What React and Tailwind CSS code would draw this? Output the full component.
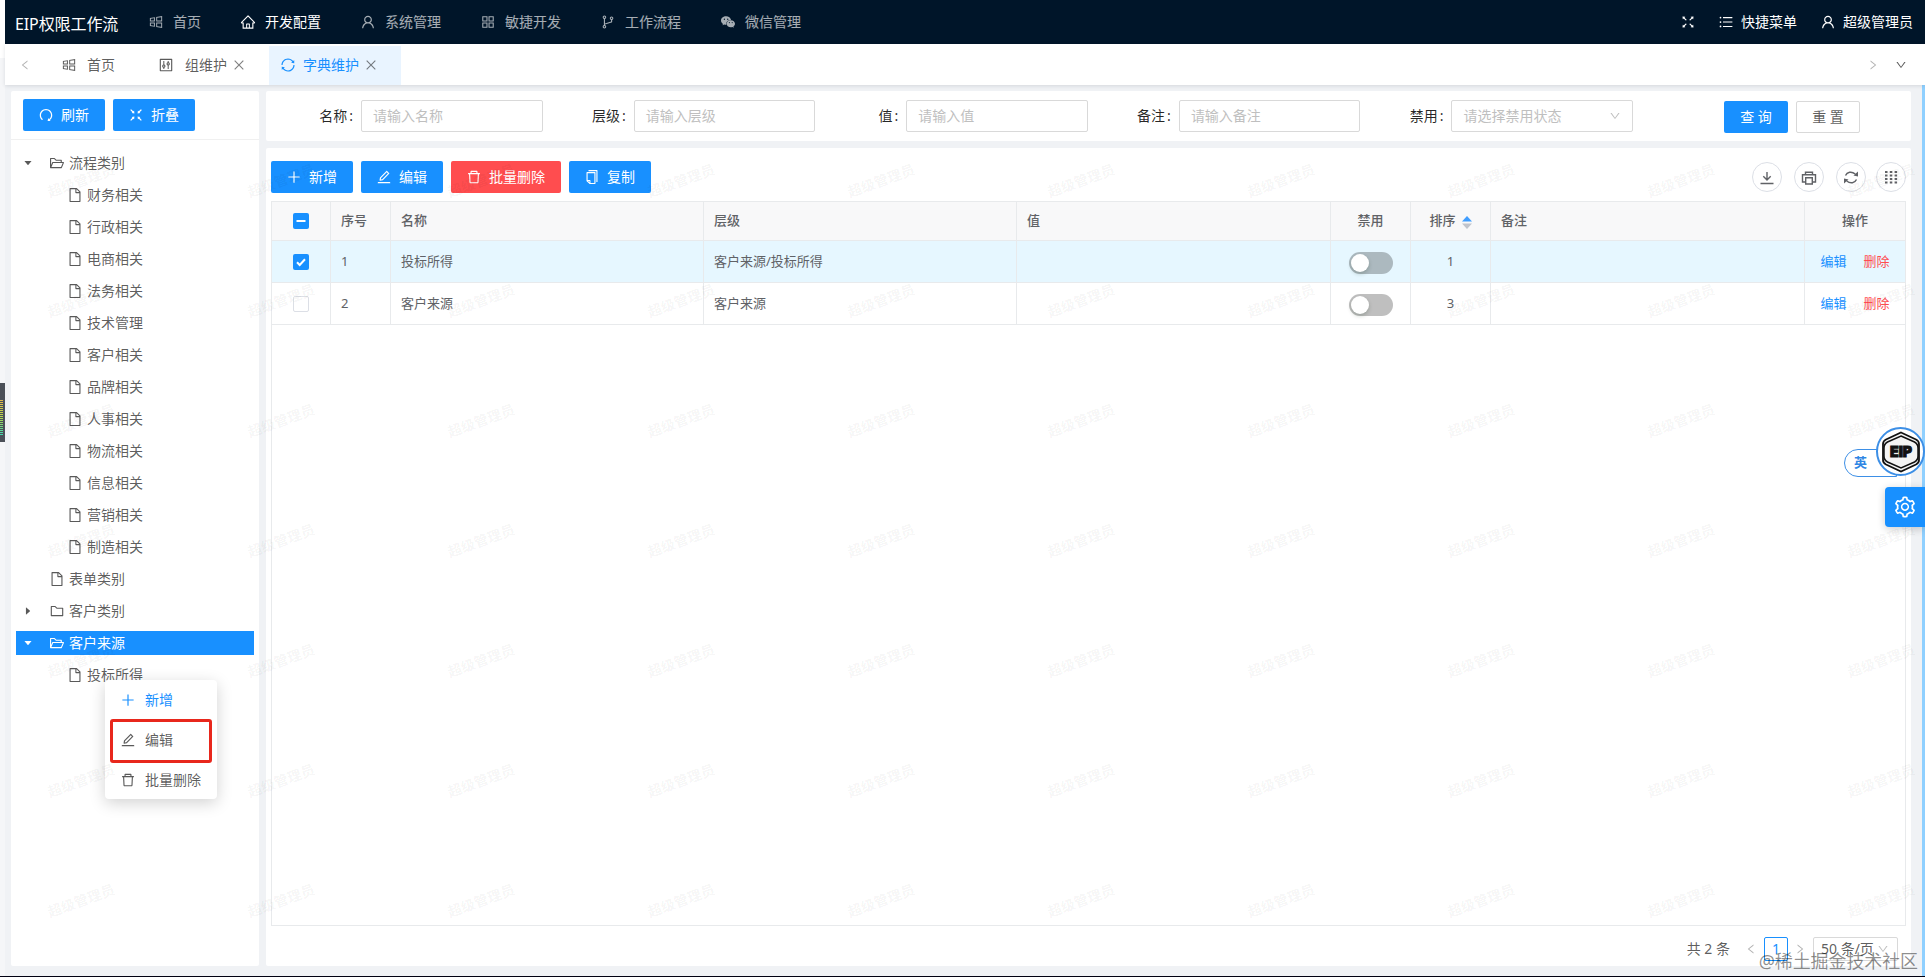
import {
  AiOutlineWindows,
  AiOutlineHome,
  AiOutlineUser,
  AiOutlineAppstore,
  AiOutlineBranches,
  AiFillWechat,
  AiOutlineFullscreen,
  AiOutlineFullscreenExit,
  AiOutlineUnorderedList,
  AiOutlineControl,
  AiOutlineSync,
  AiOutlineRedo,
  AiOutlinePlus,
  AiOutlineEdit,
  AiOutlineDelete,
  AiOutlineCopy,
  AiOutlineFile,
  AiOutlineFolder,
  AiOutlineFolderOpen,
  AiOutlineSetting,
  AiOutlineLeft,
  AiOutlineRight,
  AiOutlineDown,
  AiOutlineClose,
  AiFillCaretDown,
  AiFillCaretRight,
} from "react-icons/ai"

const navItems = [
  { label: "首页", icon: AiOutlineWindows },
  { label: "开发配置", icon: AiOutlineHome, active: true },
  { label: "系统管理", icon: AiOutlineUser },
  { label: "敏捷开发", icon: AiOutlineAppstore },
  { label: "工作流程", icon: AiOutlineBranches },
  { label: "微信管理", icon: AiFillWechat },
]

const treeItems = [
  { label: "流程类别", type: "open" },
  { label: "财务相关", type: "leaf" },
  { label: "行政相关", type: "leaf" },
  { label: "电商相关", type: "leaf" },
  { label: "法务相关", type: "leaf" },
  { label: "技术管理", type: "leaf" },
  { label: "客户相关", type: "leaf" },
  { label: "品牌相关", type: "leaf" },
  { label: "人事相关", type: "leaf" },
  { label: "物流相关", type: "leaf" },
  { label: "信息相关", type: "leaf" },
  { label: "营销相关", type: "leaf" },
  { label: "制造相关", type: "leaf" },
  { label: "表单类别", type: "file" },
  { label: "客户类别", type: "closed" },
  { label: "客户来源", type: "open", selected: true },
  { label: "投标所得", type: "leaf" },
]

const fields = [
  { label: "名称", placeholder: "请输入名称" },
  { label: "层级", placeholder: "请输入层级" },
  { label: "值", placeholder: "请输入值" },
  { label: "备注", placeholder: "请输入备注" },
  { label: "禁用", placeholder: "请选择禁用状态", select: true },
]

const rows = [
  { id: 1, name: "投标所得", level: "客户来源/投标所得", sort: 1, checked: true },
  { id: 2, name: "客户来源", level: "客户来源", sort: 3, checked: false },
]

const GRID = "grid grid-cols-[59px_60px_313px_313px_314px_80px_80px_314px_1fr]"
const CELL = "flex items-center border-r border-[#e8eaec] px-[10px]"
const ICON = "-mx-px size-4 shrink-0"

function Header() {
  return (
    <header className="flex h-11 shrink-0 bg-[#001529] text-sm text-white">
      <div className="w-[124px] pt-[12px] pl-[10px] text-base leading-6 tracking-[-0.1px] whitespace-nowrap">
        EIP权限工作流
      </div>
      <nav className="flex h-11 items-center">
        {navItems.map(({ label, icon: Icon, active }) => (
          <div
            key={label}
            className={`flex items-center gap-[10px] px-5 ${active ? "text-white" : "text-white/65"}`}
          >
            <Icon className={ICON} />
            <span>{label}</span>
          </div>
        ))}
      </nav>
      <div className="ml-auto flex h-11 items-center pr-3">
        <AiOutlineFullscreen className="mr-[22px] size-4" />
        <AiOutlineUnorderedList className="mr-[7px] size-4" />
        <span className="mr-[23px]">快捷菜单</span>
        <AiOutlineUser className="mr-[7px] size-4" />
        <span>超级管理员</span>
      </div>
    </header>
  )
}

function TabBar() {
  return (
    <div className="relative z-10 flex h-[41px] shrink-0 items-center bg-white text-sm text-black/65 shadow-[0_1px_4px_rgba(0,21,41,0.12)]">
      <AiOutlineLeft className="ml-[14px] size-3 text-black/30" />
      <div className="ml-[31px] flex items-center gap-[11px]">
        <AiOutlineWindows className={ICON} />
        <span>首页</span>
      </div>
      <div className="ml-11 flex items-center">
        <AiOutlineControl className="-ml-px mr-[11px] size-4" />
        <span>组维护</span>
        <AiOutlineClose className="ml-[5px] size-[14px] text-black/50" />
      </div>
      <div className="mt-[2px] ml-[23px] flex h-[39px] w-[132px] items-center bg-[#e9f4ff] pb-[2px] pl-[11px] text-[#1890ff]">
        <AiOutlineSync className="mr-[7px] size-4" />
        <span>字典维护</span>
        <AiOutlineClose className="ml-[5px] size-[14px] text-black/50" />
      </div>
      <AiOutlineRight className="ml-auto size-3 text-black/30" />
      <AiOutlineDown className="mr-[18px] ml-4 size-3 text-black/65" />
    </div>
  )
}

function Button({ icon: Icon, children, danger }) {
  return (
    <button
      className={`flex h-8 items-center gap-2 rounded-[2px] px-4 text-sm text-white ${danger ? "bg-[#ff4d4f]" : "bg-[#1890ff]"}`}
    >
      <Icon className={ICON} />
      <span>{children}</span>
    </button>
  )
}

function TreeNode({ label, type, selected }) {
  const color = selected ? "bg-[#1890ff] text-white" : "text-black/65"
  if (type === "leaf") {
    return (
      <li className="flex h-6 items-center gap-[5px] pl-[52px] text-black/65">
        <AiOutlineFile className={ICON} />
        <span>{label}</span>
      </li>
    )
  }
  return (
    <li className={`flex h-6 items-center gap-[5px] ${color}`}>
      <span className="ml-[7px] flex w-[22px]">
        {type === "open" && <AiFillCaretDown className="size-[10px]" />}
        {type === "closed" && <AiFillCaretRight className="size-[10px]" />}
      </span>
      {type === "open" && <AiOutlineFolderOpen className={ICON} />}
      {type === "closed" && <AiOutlineFolder className={ICON} />}
      {type === "file" && <AiOutlineFile className={ICON} />}
      <span>{label}</span>
    </li>
  )
}

function ContextMenu() {
  return (
    <div className="absolute top-[589px] left-[94px] z-20 h-[119px] w-28 rounded bg-white text-sm text-black/65 shadow-[0_4px_16px_rgba(0,0,0,0.18)]">
      <div className="flex h-10 items-center gap-[10px] pl-4 text-[#1890ff]">
        <AiOutlinePlus className={ICON} />
        <span>新增</span>
      </div>
      <div className="flex h-10 items-center gap-[10px] pl-4">
        <AiOutlineEdit className={ICON} />
        <span>编辑</span>
      </div>
      <div className="flex h-10 items-center gap-[10px] pl-4">
        <AiOutlineDelete className={ICON} />
        <span>批量删除</span>
      </div>
      <div className="absolute top-[39px] left-[5px] h-11 w-[102px] rounded-[3px] border-[3px] border-[#e8271c]" />
    </div>
  )
}

function Sidebar() {
  return (
    <aside className="relative w-[248px] shrink-0 rounded-[2px] bg-white text-sm">
      <div className="flex h-[49px] gap-2 border-b border-[#f0f0f0] pt-2 pl-3">
        <Button icon={AiOutlineRedo}>刷新</Button>
        <Button icon={AiOutlineFullscreenExit}>折叠</Button>
      </div>
      <ul className="flex flex-col gap-2 px-[5px] pt-[11px]">
        {treeItems.map((item) => (
          <TreeNode key={item.label} {...item} />
        ))}
      </ul>
      <ContextMenu />
    </aside>
  )
}

function SearchForm() {
  return (
    <div className="flex h-[50px] shrink-0 rounded-[2px] bg-white pt-[9px] pl-1 text-sm">
      {fields.map(({ label, placeholder, select }) => (
        <div key={label} className="flex w-[272.6px] items-center self-start">
          <label className="flex-1 pr-2 text-right text-black/85">
            {label}
            <span className="ml-[2px]">:</span>
          </label>
          <div className="flex h-8 w-[181.500px] items-center justify-between rounded-[2px] border border-[#d9d9d9] px-[11px] text-[#bfbfbf]">
            {placeholder}
            {select && <AiOutlineDown className="size-3" />}
          </div>
        </div>
      ))}
      <div className="mt-[1px] mr-[51px] ml-auto flex gap-2">
        <button className="h-8 w-16 rounded-[2px] bg-[#1890ff] text-white">查 询</button>
        <button className="h-8 w-16 rounded-[2px] border border-[#d9d9d9] bg-white text-black/65">重 置</button>
      </div>
    </div>
  )
}

function RoundButton({ children }) {
  return (
    <div className="flex size-[30px] items-center justify-center rounded-full border border-[#dcdfe6] text-[#606266]">
      <svg viewBox="0 0 16 16" className="size-4" fill="none" stroke="currentColor" strokeWidth="1.4">
        {children}
      </svg>
    </div>
  )
}

function Toolbar() {
  return (
    <div className="flex h-8 items-center gap-2">
      <Button icon={AiOutlinePlus}>新增</Button>
      <Button icon={AiOutlineEdit}>编辑</Button>
      <Button icon={AiOutlineDelete} danger>
        批量删除
      </Button>
      <Button icon={AiOutlineCopy}>复制</Button>
      <div className="ml-auto flex gap-3">
        <RoundButton>
          <path d="M8 3v8M4.3 7.300 8 11l3.700-3.700M1.500 14.500h13" />
        </RoundButton>
        <RoundButton>
          <path d="M4.500 5.500V3.200h7v2.300M4.500 13h-3V5.800h13V13h-3" />
          <path d="M4.700 8.700h6.600V15H4.700z" />
        </RoundButton>
        <RoundButton>
          <path d="M2.500 6.500C4 3 8.500 2 12.300 5M13.500 10.500c-1.500 3.500-6 4.500-9.800 1.500" />
          <path d="M15 2.500v5l-4.500-1zM1 14.500v-5l4.500 1z" fill="currentColor" stroke="none" />
        </RoundButton>
        <div className="-ml-[2px]">
          <RoundButton>
            <path
              d="M2 3h2.500M6.800 3h2.500M11.600 3h2.500M2 6.500h2.500M6.800 6.500h2.500M11.600 6.500h2.500M2 10h2.500M6.800 10h2.500M11.600 10h2.500M2 13.500h2.500M6.800 13.500h2.500M11.600 13.500h2.500"
              strokeWidth="2"
            />
          </RoundButton>
        </div>
      </div>
    </div>
  )
}

function Checkbox({ state }) {
  if (state === "off") {
    return <span className="size-4 rounded-[2px] border border-[#dcdfe6] bg-white" />
  }
  return (
    <span className="flex size-4 items-center justify-center rounded-[2px] bg-[#1890ff]">
      <svg viewBox="0 0 16 16" className="size-4" fill="none" stroke="#fff" strokeWidth="2">
        {state === "half" ? <path d="M3.500 8h9" /> : <path d="M4 8.300l2.700 2.700L12 5.300" />}
      </svg>
    </span>
  )
}

function Switch() {
  return (
    <span className="mt-[2px] flex h-[22px] w-11 items-center rounded-full bg-black/25 pl-[2px]">
      <span className="size-[18px] rounded-full bg-white shadow-[0_2px_4px_rgba(0,35,11,0.2)]" />
    </span>
  )
}

function DataTable() {
  return (
    <div className="mt-2 flex flex-1 flex-col border border-[#e8eaec] text-[13px] text-[#606266]">
      <div className={`${GRID} h-[39px] border-b border-[#e8eaec] bg-[#f8f8f9] font-medium`}>
        <div className={`${CELL} justify-center`}>
          <Checkbox state="half" />
        </div>
        <div className={CELL}>序号</div>
        <div className={CELL}>名称</div>
        <div className={CELL}>层级</div>
        <div className={CELL}>值</div>
        <div className={`${CELL} justify-center`}>禁用</div>
        <div className={`${CELL} justify-center`}>
          排序
          <svg viewBox="0 0 10 13" className="mt-[2px] ml-[6px] h-[13px] w-[10px]">
            <path d="M5 0l5 5.500H0z" fill="#409eff" />
            <path d="M5 13l5-5.500H0z" fill="#c0c4cc" />
          </svg>
        </div>
        <div className={CELL}>备注</div>
        <div className="flex items-center justify-center">操作</div>
      </div>
      {rows.map((row) => (
        <div
          key={row.id}
          className={`${GRID} h-[42px] border-b border-[#e8eaec] ${row.checked ? "bg-[#e6f7ff]" : ""}`}
        >
          <div className={`${CELL} justify-center`}>
            <Checkbox state={row.checked ? "on" : "off"} />
          </div>
          <div className={CELL}>{row.id}</div>
          <div className={CELL}>{row.name}</div>
          <div className={CELL}>{row.level}</div>
          <div className={CELL} />
          <div className={`${CELL} justify-center`}>
            <Switch />
          </div>
          <div className={`${CELL} justify-center`}>{row.sort}</div>
          <div className={CELL} />
          <div className="flex items-center justify-center gap-[17px]">
            <span className="text-[#1890ff]">编辑</span>
            <span className="text-[#ff4d4f]">删除</span>
          </div>
        </div>
      ))}
    </div>
  )
}

function Pager() {
  return (
    <div className="flex h-10 items-center justify-end pt-[6px] pr-2 text-sm text-black/65">
      <span>共 2 条</span>
      <AiOutlineLeft className="ml-[15px] size-3 text-black/30" />
      <span className="ml-[7px] flex size-6 items-center justify-center rounded-[2px] border border-[#1890ff] text-[#1890ff]">
        1
      </span>
      <AiOutlineRight className="ml-[6px] size-3 text-black/30" />
      <span className="ml-[7px] flex h-6 w-[85px] items-center justify-between rounded-[2px] border border-[#d9d9d9] pr-2 pl-[7px]">
        50 条/页
        <AiOutlineDown className="size-3 text-black/25" />
      </span>
    </div>
  )
}

// Marca de agua repetida sobre el contenido, una cada 200x120
function Watermark() {
  return (
    <div className="pointer-events-none absolute inset-x-0 top-[114px] bottom-0 z-30 grid auto-rows-[120px] grid-cols-[repeat(10,200px)] content-start overflow-hidden">
      {Array.from({ length: 70 }, (_, i) => (
        <span
          key={i}
          className="flex -rotate-[20deg] items-center justify-center pr-[40px] text-sm font-bold text-black/5"
        >
          超级管理员
        </span>
      ))}
    </div>
  )
}

function FloatingTools() {
  return (
    <>
      <div className="absolute top-[449px] right-[28px] z-40 flex h-7 w-[53px] items-center rounded-l-full border border-[#3d8fe6] bg-white pl-[9px] text-[13px] font-bold text-[#2f86e4]">
        英
      </div>
      <div className="absolute top-[427px] right-0 z-40 flex size-[49px] items-center justify-center rounded-full border-2 border-[#3d8fe6] bg-white">
        <svg viewBox="0 0 42 42" className="size-[42px]">
          <path
            d="M21 1.500 36 8.500Q39 10 39 13v16q0 3-3 4.500L21 40.500 6 33.500Q3 32 3 29V13q0-3 3-4.500Z"
            fill="#f4f4f4"
            stroke="#111"
            strokeWidth="1.800"
          />
          <path
            d="M21 5 34.500 11Q38 13 38 17v8q0 4-3.500 6L21 37 7.500 31Q4 29 4 25v-8q0-4 3.500-6Z"
            fill="none"
            stroke="#111"
            strokeWidth="1.500"
          />
          <text
            x="21"
            y="26"
            textAnchor="middle"
            className="font-['Inter'] text-[14px] font-black"
            fill="#111"
            stroke="#111"
            strokeWidth="1"
            textLength="22"
          >
            EIP
          </text>
        </svg>
      </div>
      <div className="absolute top-[487px] right-0 z-40 flex h-10 w-10 items-center justify-center rounded-l bg-[#1890ff] text-white shadow-[0_2px_8px_rgba(0,0,0,0.2)]">
        <AiOutlineSetting className="size-6" />
      </div>
    </>
  )
}

export default function App() {
  return (
    <div className="relative flex h-[977px] w-[1925px] overflow-hidden border-b border-[#001] bg-[#f0f2f5] font-['Noto_Sans','Noto_Sans_CJK_SC',sans-serif]">
      <div className="w-[5px] shrink-0 bg-[#f5f6f8]">
        <div className="h-[58px] bg-white" />
        <div className="mt-[325px] flex h-[59px] flex-col justify-end bg-[#4b5058] pb-[7px]">
          <div className="h-9 w-[3px] bg-[repeating-linear-gradient(to_bottom,#4b5058_0_1px,transparent_1px_2px),linear-gradient(to_bottom,#e8b84a,#b5d84f,#3fd8b0)]" />
        </div>
      </div>
      <div className="flex min-w-0 flex-1 flex-col">
        <Header />
        <TabBar />
        <div className="flex min-h-0 flex-1 gap-[7px] border-r-[3px] border-[#8fd0ff] pt-[6px] pr-[11px] pb-[10px] pl-[6px]">
          <Sidebar />
          <div className="flex min-w-0 flex-1 flex-col gap-[7px]">
            <SearchForm />
            <main className="flex flex-1 flex-col rounded-[2px] bg-white px-[5px] pt-[13px]">
              <Toolbar />
              <DataTable />
              <Pager />
            </main>
          </div>
        </div>
      </div>
      <Watermark />
      <FloatingTools />
      <div className="absolute right-[7px] bottom-[3px] z-40 text-lg leading-6 tracking-[-0.1px] text-black/45">@稀土掘金技术社区</div>
    </div>
  )
}
